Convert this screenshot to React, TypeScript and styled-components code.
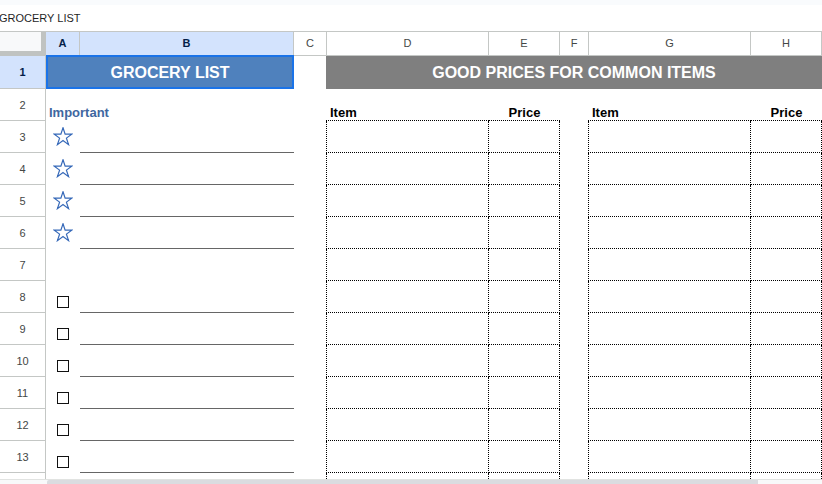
import React from 'react';
import styled, { createGlobalStyle } from 'styled-components';

const GRID_LINE = '#c4c7c5';

interface Column {
  label: string;
  selected?: boolean;
}

const COLUMNS: Column[] = [
  { label: 'A', selected: true },
  { label: 'B', selected: true },
  { label: 'C' },
  { label: 'D' },
  { label: 'E' },
  { label: 'F' },
  { label: 'G' },
  { label: 'H' },
];

type Marker = 'star' | 'box' | null;

// rows 3..14, the last one is only peeking above the scrollbar
const ROWS: { n: number; marker: Marker }[] = Array.from({ length: 12 }, (_, i) => {
  const n = i + 3;
  let marker: Marker = null;
  if (n <= 6) marker = 'star';
  else if (n >= 8 && n <= 13) marker = 'box';
  return { n, marker };
});

const GlobalStyle = createGlobalStyle`
  html, body {
    margin: 0;
    padding: 0;
    background: #ffffff;
  }
  body {
    font-family: "Liberation Sans", Arial, sans-serif;
  }
`;

const Star = () => (
  <svg width='20' height='19' viewBox='0 0 20 19'>
    <polygon
      points='10,0.8 12.12,7.08 19,7.08 13.43,11.12 15.56,17.65 10,13.61 4.44,17.65 6.57,11.12 1,7.08 7.88,7.08'
      fill='none'
      stroke='#3568b8'
      strokeWidth='1.2'
      strokeLinejoin='miter'
    />
  </svg>
);

export default function App() {
  return (
    <>
      <GlobalStyle />
      <Page>
        <TopStrip />
        <FormulaBar>GROCERY LIST</FormulaBar>
        <Sheet>
          <Corner />
          {COLUMNS.map((c) => (
            <ColHeader key={c.label} selected={!!c.selected}>
              {c.label}
            </ColHeader>
          ))}

          <RowHeader selected>1</RowHeader>
          <TitleCell>
            GROCERY LIST
            <Selection />
          </TitleCell>
          <Cell />
          <BannerCell>GOOD PRICES FOR COMMON ITEMS</BannerCell>

          <RowHeader>2</RowHeader>
          <ImportantCell>Important</ImportantCell>
          <Cell />
          <TableHead first>Item</TableHead>
          <TableHead align='center'>Price</TableHead>
          <Cell />
          <TableHead first>Item</TableHead>
          <TableHead align='center'>Price</TableHead>

          {ROWS.map((r) => (
            <React.Fragment key={r.n}>
              <RowHeader>{r.n < 14 ? r.n : ''}</RowHeader>
              <MarkerCell marker={r.marker}>
                {r.marker === 'star' && <Star />}
                {r.marker === 'box' && <CheckBox />}
              </MarkerCell>
              <LineCell lined={r.marker !== null} />
              <Cell />
              <TableCell first />
              <TableCell />
              <Cell />
              <TableCell first />
              <TableCell />
            </React.Fragment>
          ))}
        </Sheet>
        <ScrollBar>
          <Thumb />
        </ScrollBar>
      </Page>
    </>
  );
}

const Page = styled.div`
  width: 822px;
  height: 484px;
  display: flex;
  flex-direction: column;
  overflow: hidden;
  background: #ffffff;
`;

const TopStrip = styled.div`
  height: 5px;
  flex: none;
  background: #f9fbfd;
`;

const FormulaBar = styled.div`
  height: 27px;
  flex: none;
  display: flex;
  align-items: center;
  padding: 0 0 1px 0;
  margin-left: -1px;
  box-sizing: border-box;
  border-bottom: 1px solid ${GRID_LINE};
  font-size: 11px;
  color: #1f1f1f;
`;

const Sheet = styled.div`
  flex: 1;
  min-height: 0;
  overflow: hidden;
  display: grid;
  grid-template-columns: 46px 34px 214px 33px 162px 71px 29px 162px 71px;
  grid-template-rows: 24px 33px repeat(13, 32px);
  align-content: start;
`;

const Corner = styled.div`
  box-sizing: border-box;
  background: #f8f9fa;
  border-right: 5px solid #c0c3c1;
  border-bottom: 5px solid #c0c3c1;
`;

const ColHeader = styled.div<{ selected: boolean }>`
  box-sizing: border-box;
  display: flex;
  align-items: center;
  justify-content: center;
  font-size: 11px;
  padding-bottom: 1px;
  background: ${(p) => (p.selected ? '#d3e3fd' : '#ffffff')};
  color: ${(p) => (p.selected ? '#041e49' : '#444746')};
  font-weight: ${(p) => (p.selected ? 700 : 400)};
  border-right: 1px solid ${GRID_LINE};
  border-bottom: 1px solid ${GRID_LINE};
`;

const RowHeader = styled.div<{ selected?: boolean }>`
  box-sizing: border-box;
  display: flex;
  align-items: center;
  justify-content: center;
  font-size: 11px;
  background: ${(p) => (p.selected ? '#d3e3fd' : '#ffffff')};
  color: ${(p) => (p.selected ? '#041e49' : '#444746')};
  font-weight: ${(p) => (p.selected ? 700 : 400)};
  border-right: 1px solid ${GRID_LINE};
  border-bottom: 1px solid ${GRID_LINE};
`;

const Cell = styled.div`
  box-sizing: border-box;
`;

const TitleCell = styled.div`
  grid-column: span 2;
  position: relative;
  display: flex;
  align-items: center;
  justify-content: center;
  background: #4f81bd;
  color: #ffffff;
  font-size: 16px;
  font-weight: 700;
`;

const Selection = styled.div`
  position: absolute;
  top: -1px;
  left: 0;
  right: 0;
  bottom: 0;
  border: 2px solid #1a73e8;
  pointer-events: none;
`;

const BannerCell = styled.div`
  grid-column: span 5;
  margin-left: -1px;
  display: flex;
  align-items: center;
  justify-content: center;
  background: #7f7f7f;
  color: #ffffff;
  font-size: 16px;
  font-weight: 700;
`;

const ImportantCell = styled.div`
  grid-column: span 2;
  display: flex;
  align-items: flex-end;
  padding: 0 0 1px 3px;
  font-size: 13px;
  font-weight: 700;
  color: #3f67a0;
`;

const TableHead = styled.div<{ first?: boolean; align?: string }>`
  box-sizing: border-box;
  display: flex;
  align-items: flex-end;
  justify-content: ${(p) => (p.align === 'center' ? 'center' : 'flex-start')};
  margin-left: ${(p) => (p.first ? '-1px' : '0')};
  padding: 0 0 0 ${(p) => (p.first ? '4px' : '0')};
  font-size: 13px;
  font-weight: 700;
  color: #000000;
  border-bottom: 1px dotted #000000;
`;

const TableCell = styled.div<{ first?: boolean }>`
  box-sizing: border-box;
  margin-left: ${(p) => (p.first ? '-1px' : '0')};
  border-left: ${(p) => (p.first ? '1px dotted #000000' : 'none')};
  border-right: 1px dotted #000000;
  border-bottom: 1px dotted #000000;
`;

const MarkerCell = styled.div<{ marker: Marker }>`
  display: flex;
  justify-content: center;
  align-items: ${(p) => (p.marker === 'box' ? 'flex-end' : 'center')};
  padding: 0 1px ${(p) => (p.marker === 'box' ? '5px' : '2px')} 0;
  box-sizing: border-box;
`;

const CheckBox = styled.span`
  display: block;
  width: 12px;
  height: 12px;
  box-sizing: border-box;
  border: 1.5px solid #111111;
`;

const LineCell = styled.div<{ lined: boolean }>`
  box-sizing: border-box;
  border-bottom: ${(p) => (p.lined ? '1px solid #666666' : 'none')};
`;

const ScrollBar = styled.div`
  height: 5px;
  flex: none;
  box-sizing: border-box;
  display: flex;
  padding-left: 47px;
  background: #f8f9fa;
  border-top: 1px solid #e1e3e1;
`;

const Thumb = styled.div`
  width: 711px;
  height: 100%;
  background: #dadce0;
  border-radius: 2px 0 0 0;
`;
